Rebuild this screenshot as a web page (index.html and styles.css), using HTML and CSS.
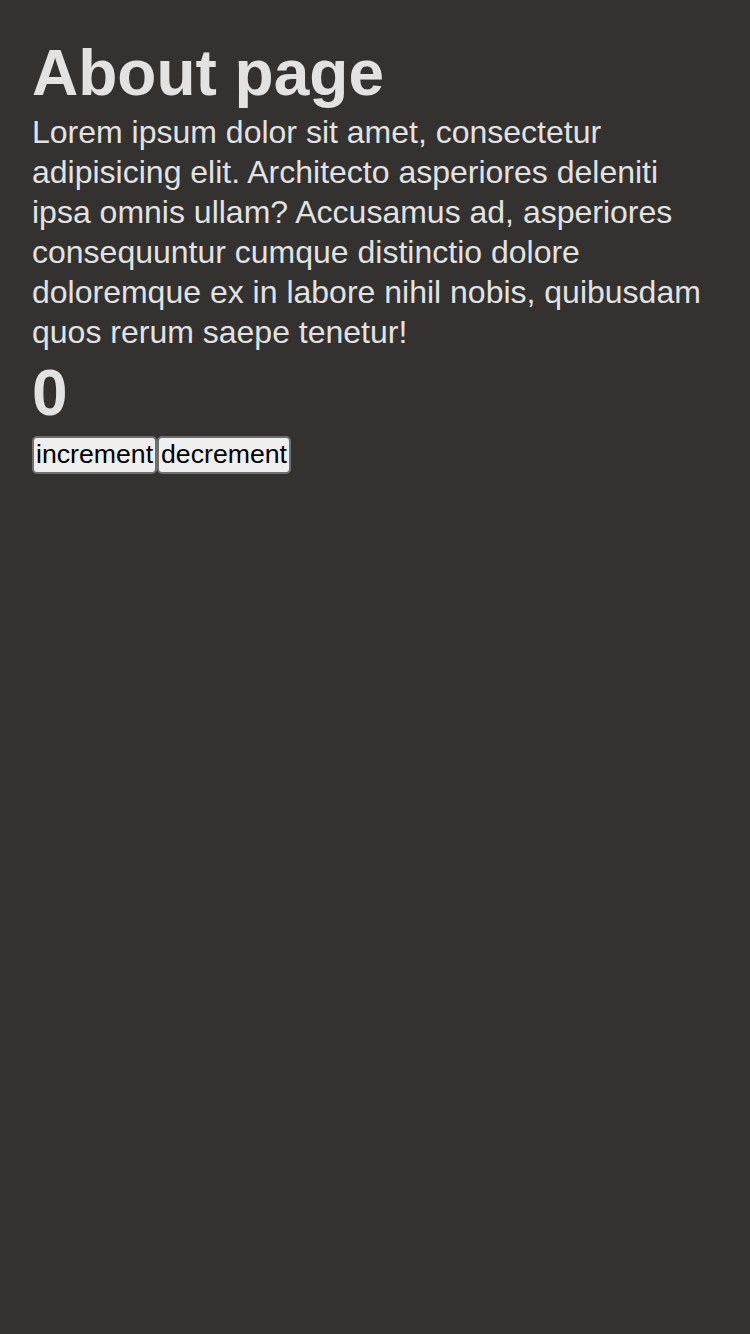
FILE: index.html
```html
<!DOCTYPE html>
<html lang="en">
<head>
<meta charset="utf-8">
<title>About page</title>
<link rel="stylesheet" href="styles.css">
</head>
<body>
<main class="page">
  <h1 class="title">About page</h1>
  <p class="text">Lorem ipsum dolor sit amet, consectetur adipisicing elit. Architecto asperiores deleniti ipsa omnis ullam? Accusamus ad, asperiores consequuntur cumque distinctio dolore doloremque ex in labore nihil nobis, quibusdam quos rerum saepe tenetur!</p>
  <h2 class="count">0</h2>
  <div class="actions">
    <button class="btn" type="button">increment</button><button class="btn" type="button">decrement</button>
  </div>
</main>
</body>
</html>
```

FILE: styles.css
```css
html, body {
  margin: 0;
  padding: 0;
  background: #333231;
  min-height: 100%;
}
body {
  font-family: "Liberation Sans", Arial, sans-serif;
  color: #e2e2e2;
}
.page {
  padding: 36px 32px 32px;
}
.title {
  margin: 0 0 2px;
  font-size: 64px;
  font-weight: bold;
  line-height: 74px;
}
.text {
  margin: 0;
  font-size: 32px;
  line-height: 40px;
}
.count {
  margin: 4px 0 0;
  font-size: 64px;
  font-weight: bold;
  line-height: 74px;
}
.actions {
  display: flex;
  margin-top: 6px;
}
.btn {
  font-family: "Liberation Sans", Arial, sans-serif;
  font-size: 26.67px;
  line-height: 30px;
  color: #000;
  background: #efefef;
  border: 2px solid #6f6f6f;
  border-radius: 5px;
  padding: 1px 2px 3px;
  margin: 0;
}
```
